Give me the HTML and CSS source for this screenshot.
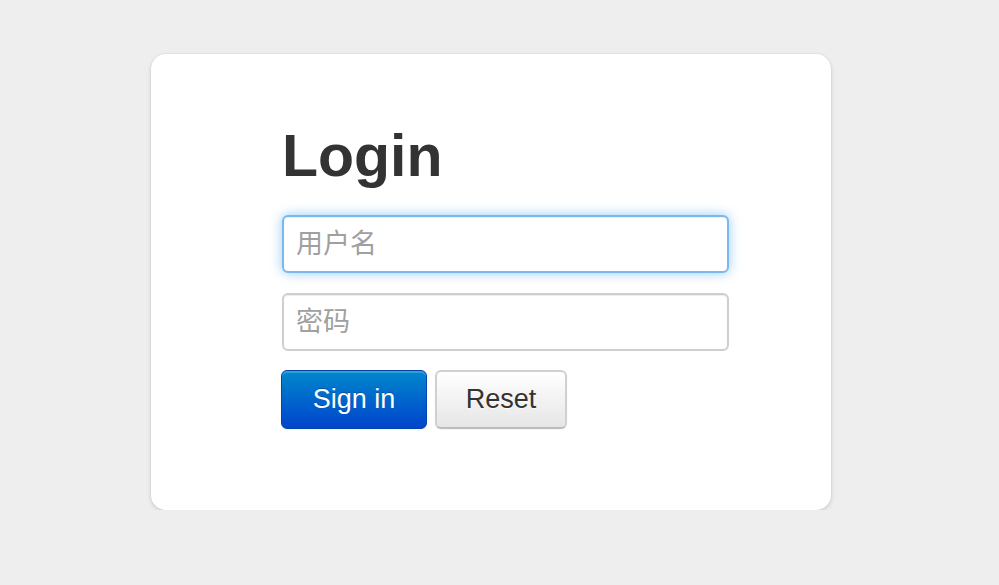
FILE: index.html
```html
<!DOCTYPE html>
<html lang="zh-CN">
<head>
<meta charset="utf-8">
<title>Login</title>
<link rel="stylesheet" href="styles.css">
</head>
<body>
<div class="page">
  <form class="card" onsubmit="return false;">
    <h1 class="title">Login</h1>
    <input class="field field-focus" type="text" placeholder="用户名">
    <input class="field" type="password" placeholder="密码">
    <div class="actions">
      <button class="btn btn-primary" type="submit">Sign in</button>
      <button class="btn btn-default" type="reset">Reset</button>
    </div>
  </form>
</div>
</body>
</html>
```
FILE: styles.css
```css
html, body {
  margin: 0;
  padding: 0;
  background: #eeeeee;
  font-family: "Liberation Sans", Arial, "Noto Sans CJK SC", sans-serif;
}

.page {
  padding-top: 54px;
  padding-left: 151px;
}

.card {
  box-sizing: border-box;
  width: 680px;
  height: 456px;
  background: #ffffff;
  border-radius: 15px;
  box-shadow: 0 0 0 1px rgba(0, 0, 0, 0.03), 0 2px 5px rgba(0, 0, 0, 0.12);
  padding: 70px 0 0 131px;
  display: flex;
  flex-direction: column;
  align-items: flex-start;
}

.title {
  margin: 0 0 27px 0;
  font-size: 59px;
  line-height: 64px;
  font-weight: bold;
  color: #333333;
}

.field {
  box-sizing: border-box;
  width: 447px;
  height: 58px;
  margin: 0 0 20px 0;
  padding: 0 12px;
  border: 2px solid #cfcfcf;
  border-radius: 6px;
  background: #ffffff;
  font-family: "Liberation Sans", "Noto Sans CJK SC", sans-serif;
  font-size: 27px;
  color: #555555;
  outline: none;
  box-shadow: inset 0 1px 1px rgba(0, 0, 0, 0.075);
}

.field::placeholder {
  color: #a0a0a0;
  font-family: "Noto Sans CJK SC", sans-serif;
}

.field-focus {
  border-color: #7ab9ef;
  box-shadow: inset 0 1px 1px rgba(0, 0, 0, 0.075), 0 0 12px rgba(82, 168, 236, 0.6);
}

.actions {
  display: flex;
  gap: 8px;
  margin: -1px 0 0 -1px;
}

.btn {
  box-sizing: border-box;
  height: 59px;
  border-radius: 6px;
  font-family: "Liberation Sans", Arial, sans-serif;
  font-size: 27px;
  cursor: pointer;
  padding: 0;
}

.btn-primary {
  width: 146px;
  color: #ffffff;
  border: 1px solid #0044b0;
  background: linear-gradient(to bottom, #0088cc, #0044cc);
  text-shadow: 0 -1px 0 rgba(0, 0, 0, 0.25);
  box-shadow: inset 0 2px 0 rgba(255, 255, 255, 0.2), 0 1px 2px rgba(0, 0, 0, 0.05);
}

.btn-default {
  width: 132px;
  color: #333333;
  border: 2px solid #d0d0d0;
  border-bottom-color: #bcbcbc;
  background: linear-gradient(to bottom, #ffffff, #e6e6e6);
  text-shadow: 0 1px 1px rgba(255, 255, 255, 0.75);
  box-shadow: 0 1px 2px rgba(0, 0, 0, 0.05);
}
```
